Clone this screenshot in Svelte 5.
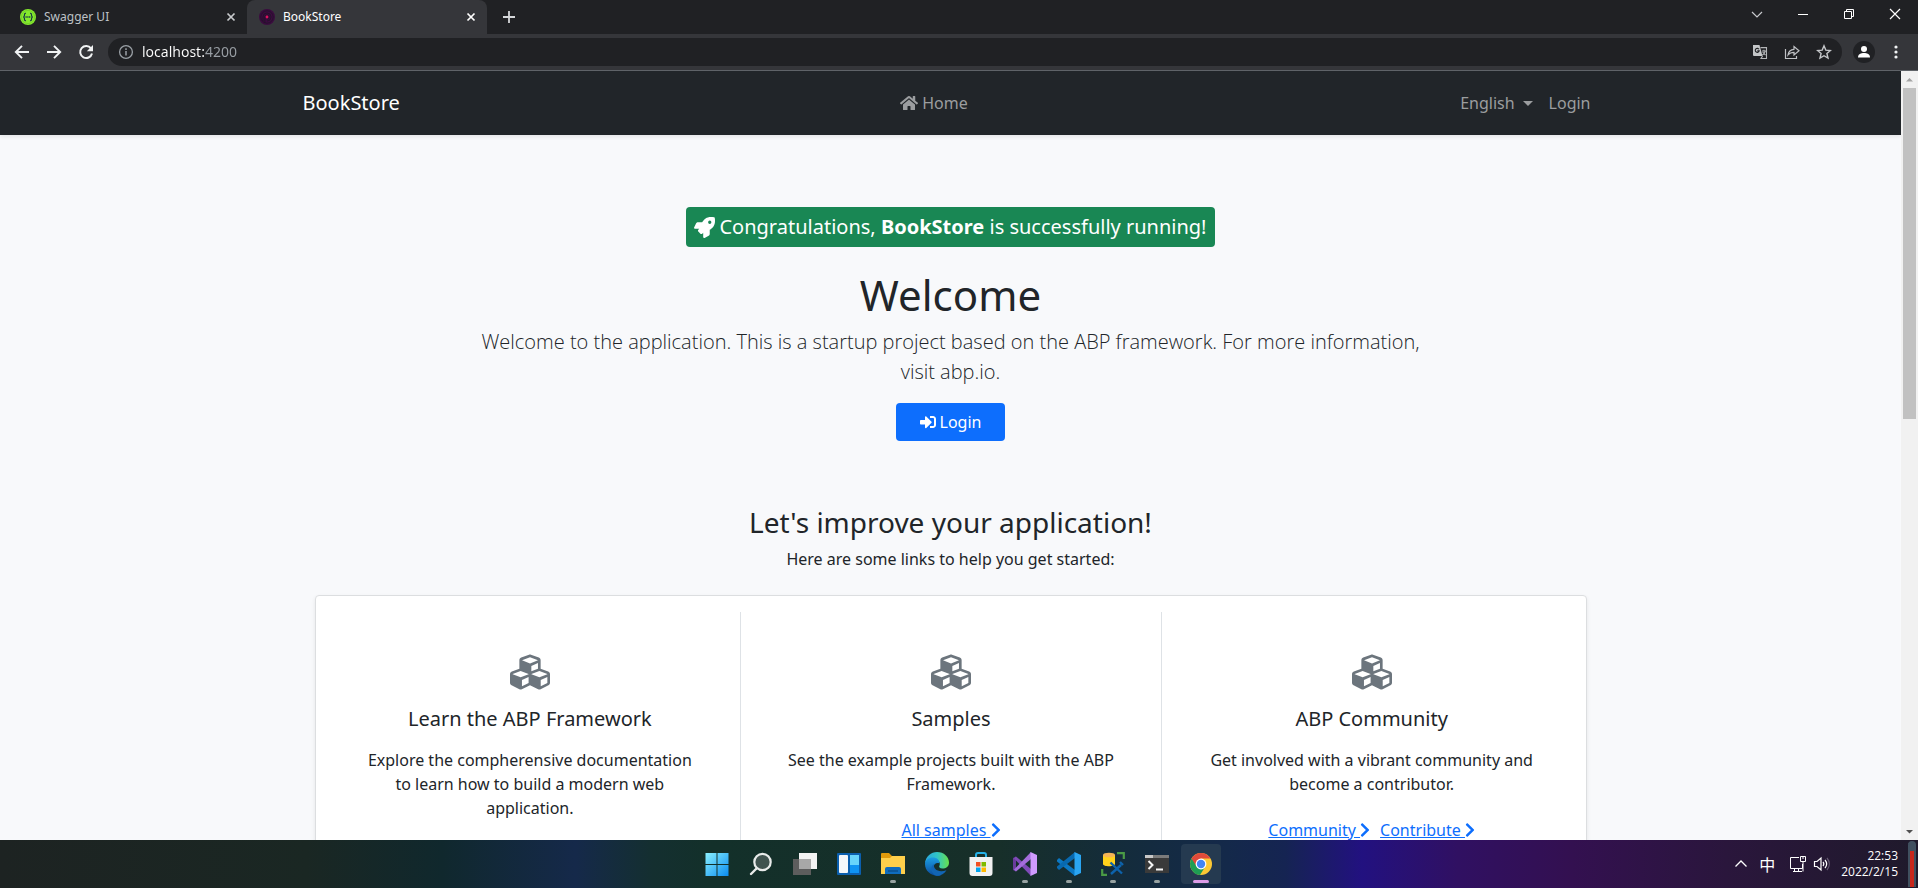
<script>
    let address = 'localhost:4200';

    const chevron = 'M285.476 272.971L91.132 467.314c-9.373 9.373-24.569 9.373-33.941 0l-22.667-22.667c-9.357-9.357-9.375-24.522-.04-33.901L188.505 256 34.484 101.255c-9.335-9.379-9.317-24.544.04-33.901l22.667-22.667c9.373-9.373 24.569-9.373 33.941 0L285.475 239.03c9.373 9.372 9.373 24.568.001 33.941z';

    const cubes = 'M488.6 250.2L392 214V105.5c0-15-9.3-28.4-23.4-33.7l-100-37.5c-8.1-3.1-17.1-3.1-25.3 0l-100 37.5c-14.1 5.3-23.4 18.7-23.4 33.7V214l-96.6 36.2C9.3 255.5 0 268.9 0 283.9V394c0 13.6 7.7 26.1 19.9 32.2l100 50c10.1 5.1 22.1 5.1 32.2 0l103.9-52 103.9 52c10.1 5.1 22.1 5.1 32.2 0l100-50c12.2-6.1 19.9-18.6 19.9-32.2V283.9c0-15-9.3-28.4-23.4-33.7zM358 214.8l-85 31.9v-68.2l85-37v73.3zM154 104.1l102-38.2 102 38.2v.6l-102 41.4-102-41.4v-.6zm84 291.1l-85 42.5v-79.1l85-38.8v75.4zm0-112l-102 41.4-102-41.4v-.6l102-38.2 102 38.2v.6zm240 112l-85 42.5v-79.1l85-38.8v75.4zm0-112l-102 41.4-102-41.4v-.6l102-38.2 102 38.2v.6z';

    const cards = [
        {
            title: 'Learn the ABP Framework',
            text: 'Explore the compherensive documentation to learn how to build a modern web application.',
            links: []
        },
        {
            title: 'Samples',
            text: 'See the example projects built with the ABP Framework.',
            links: ['All samples']
        },
        {
            title: 'ABP Community',
            text: 'Get involved with a vibrant community and become a contributor.',
            links: ['Community', 'Contribute']
        }
    ];

    const apps = [
        { id: 'start', name: 'Start' },
        { id: 'search', name: 'Search' },
        { id: 'tasks', name: 'Task view' },
        { id: 'widgets', name: 'Widgets' },
        { id: 'files', name: 'File Explorer', running: true },
        { id: 'edge', name: 'Edge' },
        { id: 'store', name: 'Store' },
        { id: 'vs', name: 'Visual Studio', running: true },
        { id: 'code', name: 'Visual Studio Code', running: true },
        { id: 'sql', name: 'SQL Server Management Studio', running: true },
        { id: 'terminal', name: 'Terminal', running: true },
        { id: 'chrome', name: 'Chrome', running: true, active: true }
    ];
</script>

<div class="screen">
    <header class="browser">
        <div class="tabs">
            <div class="tab">
                <svg class="i16" viewBox="0 0 16 16">
                    <circle cx="8" cy="8" r="8" fill="#85ea2d" />
                    <circle cx="8" cy="8" r="6.6" fill="none" stroke="#6bbf2a" stroke-width=".6" />
                    <path d="M6 4.3c-1.500-.2-1.500.7-1.500 1.700S4.400 7.800 3.300 8c1.100.2 1.200 1 1.200 2s0 1.900 1.500 1.700M10 4.300c1.500-.2 1.500.7 1.500 1.700s.1 1.800 1.200 2c-1.100.2-1.200 1-1.200 2s0 1.900-1.500 1.700" fill="none" stroke="#173647" stroke-width="1.2" />
                    <path d="M5.500 8h5" stroke="#173647" stroke-width="1.400" stroke-dasharray="1.200 .6" />
                </svg>
                <span>Swagger UI</span>
                <button aria-label="Close Swagger UI">
                    <svg class="i16" viewBox="0 0 16 16"><path d="M4.500 4.500l7 7M11.500 4.500l-7 7" stroke="#c8cacd" stroke-width="1.700" /></svg>
                </button>
            </div>
            <div class="tab active">
                <svg class="i16" viewBox="0 0 16 16">
                    <circle cx="8" cy="8" r="8" fill="#3b0a3f" />
                    <g fill="none" stroke="#1f1426" stroke-width=".8">
                        <circle cx="8" cy="8" r="6.200" />
                        <path d="M5.800 14V8a2.200 2.200 0 1 1 2.200 2.200M4 12V8a4 4 0 1 1 4 4" />
                    </g>
                    <circle cx="8" cy="8" r="1.400" fill="#e0115f" />
                </svg>
                <span>BookStore</span>
                <button aria-label="Close BookStore">
                    <svg class="i16" viewBox="0 0 16 16"><path d="M4.500 4.500l7 7M11.500 4.500l-7 7" stroke="#fff" stroke-width="1.700" /></svg>
                </button>
            </div>
            <button class="new-tab" aria-label="New tab">
                <svg class="i16" viewBox="0 0 16 16"><path d="M8 2v12M2 8h12" stroke="#d5d7da" stroke-width="1.800" /></svg>
            </button>
            <div class="window">
                <button aria-label="Search tabs"><svg class="i16" viewBox="0 0 16 16"><path d="M3 6l5 5 5-5" fill="none" stroke="#c8cacd" stroke-width="1.200" /></svg></button>
                <button aria-label="Minimize"><svg class="i16" viewBox="0 0 16 16"><path d="M3 8.500h10" stroke="#fff" /></svg></button>
                <button aria-label="Restore"><svg class="i16" viewBox="0 0 16 16"><path d="M3.500 5.500h7v7h-7zM5.500 5V3.500h7v7H11" fill="none" stroke="#fff" /></svg></button>
                <button aria-label="Close"><svg class="i16" viewBox="0 0 16 16"><path d="M3 3l10 10M13 3L3 13" stroke="#fff" stroke-width="1.200" /></svg></button>
            </div>
        </div>

        <div class="toolbar">
            <button aria-label="Back"><svg class="i16" viewBox="0 0 16 16"><path d="M15 8H2.500M8 1.800L1.800 8 8 14.200" fill="none" stroke="#f1f3f4" stroke-width="1.900" /></svg></button>
            <button aria-label="Forward"><svg class="i16" viewBox="0 0 16 16"><path d="M1 8h12.500M8 1.800L14.200 8 8 14.200" fill="none" stroke="#f1f3f4" stroke-width="1.900" /></svg></button>
            <button aria-label="Reload"><svg class="i16" viewBox="0 0 16 16"><path d="M13 4.400A6 6 0 1 0 14 9.500" fill="none" stroke="#f1f3f4" stroke-width="2" /><path d="M15 1v6.200H8.800z" fill="#f1f3f4" /></svg></button>
            <div class="omnibox">
                <svg class="i16" viewBox="0 0 16 16"><circle cx="8" cy="8" r="6.400" fill="none" stroke="#9aa0a6" stroke-width="1.300" /><path d="M8 7v4.500M8 4.300v1.600" stroke="#9aa0a6" stroke-width="1.500" /></svg>
                <input aria-label="Address" bind:value={address} />
                <button aria-label="Translate">
                    <svg class="i16" viewBox="0 0 16 16">
                        <path d="M1 1h6.500l3 11H2a1 1 0 0 1-1-1z" fill="#c4c6c8" />
                        <path d="M8.500 3.600h6v10.900H9l1.600-2.500M10 7h4M12 5.800V7M13.300 7c-.3 2-1.500 3.200-3 4M10.700 8.200l2.800 3" fill="none" stroke="#b4b6b8" stroke-width="1.100" />
                        <path d="M7 5.300a2 2 0 1 0 .2 1.600H5.300" fill="none" stroke="#202124" stroke-width="1.100" />
                    </svg>
                </button>
                <button aria-label="Share">
                    <svg class="i16" viewBox="0 0 16 16"><path d="M1.500 5v9.500h11V12M4 11c.6-4 2.600-5.500 6-5.700V2.500l5 4.300-5 4.200V8.300C7.400 8.300 5.600 9 4 11z" fill="none" stroke="#c0c2c5" stroke-width="1.200" /></svg>
                </button>
                <button aria-label="Bookmark">
                    <svg class="i16" viewBox="0 0 16 16"><path d="M8 1.800l1.800 4.300 4.600.4-3.500 3 1.100 4.600L8 11.700 4 14.100l1.100-4.600-3.500-3 4.600-.4z" fill="none" stroke="#c4c6c9" stroke-width="1.400" /></svg>
                </button>
            </div>
            <button class="avatar" aria-label="Profile"><svg class="i16" viewBox="0 0 16 16"><circle cx="8" cy="5" r="3" fill="#fff" /><path d="M2 13.500c0-3.500 3-4.500 6-4.500s6 1 6 4.500z" fill="#fff" /></svg></button>
            <button aria-label="Menu"><svg class="i16" viewBox="0 0 16 16"><g fill="#f1f3f4"><circle cx="8" cy="3" r="1.600" /><circle cx="8" cy="8" r="1.600" /><circle cx="8" cy="13" r="1.600" /></g></svg></button>
        </div>
    </header>

    <div class="viewport">
        <div class="page">
            <nav class="navbar">
                <div class="container">
                    <a class="brand" href="/">BookStore</a>
                    <a class="home" href="/">
                        <svg width="18" height="16" viewBox="0 0 576 512"><path fill="currentColor" d="M280.37 148.26L96 300.11V464a16 16 0 0 0 16 16l112.06-.29a16 16 0 0 0 15.92-16V368a16 16 0 0 1 16-16h64a16 16 0 0 1 16 16v95.64a16 16 0 0 0 16 16.05L464 480a16 16 0 0 0 16-16V300L295.67 148.26a12.19 12.19 0 0 0-15.3 0zM571.6 251.47L488 182.56V44.05a12 12 0 0 0-12-12h-56a12 12 0 0 0-12 12v72.61L318.47 43a48 48 0 0 0-61 0L4.34 251.47a12 12 0 0 0-1.6 16.9l25.5 31A12 12 0 0 0 45.15 301l235.22-193.74a12.19 12.19 0 0 1 15.3 0L530.9 301a12 12 0 0 0 16.9-1.6l25.5-31a12 12 0 0 0-1.7-16.93z" /></svg>
                        Home
                    </a>
                    <button class="language">English <span class="caret"></span></button>
                    <a href="/account/login">Login</a>
                </div>
            </nav>

            <main>
                <div class="badge">
                    <svg width="21" height="21" viewBox="0 0 512 512"><path fill="currentColor" d="M505.12 19.094c-1.19-5.532-6.658-11-12.207-12.188C460.716 0 435.507 0 410.407 0 307.175 0 245.27 55.203 199.052 128H94.838c-16.348.016-35.557 11.875-42.887 26.484L2.516 253.297A28.4 28.4 0 0 0 0 264a24 24 0 0 0 24.006 24h103.81l-22.474 22.469c-11.365 11.361-12.996 32.258 0 45.25l50.904 50.906c11.156 11.188 32.156 13.156 45.277 0l22.475-22.469V488a24 24 0 0 0 24.006 24 28.56 28.56 0 0 0 10.707-2.516l98.728-49.39c14.629-7.297 26.508-26.5 26.508-42.86V312.797c72.597-46.313 128.035-108.406 128.035-211.094.093-25.203.093-50.406-6.862-82.609zM384.04 168a40 40 0 1 1 40.01-40 40.02 40.02 0 0 1-40.01 40z" /></svg>
                    <span>Congratulations, <strong>BookStore</strong> is successfully running!</span>
                </div>
                <h1>Welcome</h1>
                <p class="lead">Welcome to the application. This is a startup project based on the ABP framework. For more information, visit abp.io.</p>
                <a class="btn" href="/account/login">
                    <svg width="16" height="16" viewBox="0 0 512 512"><path fill="currentColor" d="M416 448h-84c-6.600 0-12-5.400-12-12v-40c0-6.600 5.400-12 12-12h84c17.700 0 32-14.300 32-32V160c0-17.700-14.300-32-32-32h-84c-6.600 0-12-5.400-12-12V76c0-6.600 5.400-12 12-12h84c53 0 96 43 96 96v192c0 53-43 96-96 96zm-47-201L201 79c-15-15-41-4.500-41 17v96H24c-13.300 0-24 10.700-24 24v96c0 13.300 10.700 24 24 24h136v96c0 21.500 26 32 41 17l168-168c9.300-9.400 9.300-24.600 0-34z" /></svg>
                    Login
                </a>

                <h2>Let's improve your application!</h2>
                <p>Here are some links to help you get started:</p>

                <section class="card">
                    {#each cards as card}
                        <article>
                            <svg class="cubes" width="40" height="40" viewBox="0 0 512 512"><path fill="currentColor" d={cubes} /></svg>
                            <h3>{card.title}</h3>
                            <p>{card.text}</p>
                            <div class="links">
                                {#each card.links as link}
                                    <a href="/">{link} <svg width="10" height="16" viewBox="0 0 320 512"><path fill="currentColor" d={chevron} /></svg></a>
                                {/each}
                            </div>
                        </article>
                    {/each}
                </section>
            </main>
        </div>
        <div class="scrollbar">
            <svg width="17" height="17" viewBox="0 0 17 17"><path d="M5 10.500h7L8.500 7z" fill="#a3a3a3" /></svg>
            <div class="track"><div class="thumb"></div></div>
            <svg width="17" height="17" viewBox="0 0 17 17"><path d="M5 7h7l-3.500 3.500z" fill="#505050" /></svg>
        </div>
    </div>

    <footer class="taskbar">
        <div class="apps">
            {#each apps as app}
                <button class:running={app.running} class:active={app.active} aria-label={app.name}>
                    <svg width="24" height="24" viewBox="0 0 24 24">
                        {#if app.id === 'start'}
                            <defs><linearGradient id="win" x1="0" y1="0" x2="1" y2="1"><stop stop-color="#8af0ff" /><stop offset="1" stop-color="#0a8cf0" /></linearGradient></defs>
                            <path d="M.5 1h11v11H.5zM12.500 1h11v11h-11zM.5 13h11v11H.5zM12.500 13h11v11h-11z" fill="url(#win)" />
                        {:else if app.id === 'search'}
                            <circle cx="13.500" cy="10" r="8.200" fill="#40534f" stroke="#e8ebea" stroke-width="2.200" />
                            <path d="M7.500 16.500l-5.500 5.500" stroke="#e8ebea" stroke-width="2.400" stroke-linecap="round" />
                        {:else if app.id === 'tasks'}
                            <path d="M6 1h18v16H6z" fill="#f3f3f3" />
                            <path d="M0 7h18v16H0z" fill="#5d5d5d" />
                            <path d="M6 7h12v10H6z" fill="#a8a8a8" />
                        {:else if app.id === 'widgets'}
                            <rect y="1" width="24" height="22" rx="1" fill="#0b5fae" />
                            <rect x="2" y="3" width="9" height="18" rx="1" fill="#f5f7fa" />
                            <path d="M13 3h9v10h-9z" fill="#68d4fb" />
                            <path d="M13 13h9v8h-9z" fill="#0f93f2" />
                        {:else if app.id === 'files'}
                            <path d="M0 2a1 1 0 0 1 1-1h7l3 3h12v8H0z" fill="#e29b0b" />
                            <path d="M0 6h9l2-2h13v18H0z" fill="#ffd04b" />
                            <path d="M4 22v-5a2 2 0 0 1 2-2h12a2 2 0 0 1 2 2v5z" fill="#0f6cbd" />
                            <path d="M7 19h10" stroke="#0b4f8e" stroke-width="1.500" />
                        {:else if app.id === 'edge'}
                            <defs>
                                <linearGradient id="edge-top" x1="0" x2="1"><stop stop-color="#2aa6dc" /><stop offset=".5" stop-color="#30c4c8" /><stop offset="1" stop-color="#68e04a" /></linearGradient>
                                <linearGradient id="edge-low" y1="0" y2="1" x1="0" x2="0"><stop stop-color="#1b9de2" /><stop offset="1" stop-color="#0b4a9c" /></linearGradient>
                            </defs>
                            <path d="M0 11C1 4 6 0 12 0c7 0 12 5 12 10.500 0 4-3 6-6.500 6-3 0-4-1.500-3-3 1-2 0-5.500-4-5.500C6 8 1.500 9 0 11z" fill="url(#edge-top)" />
                            <path d="M0 12c0-4 4-6.500 8-6.500 3.500 0 6.500 2 6.500 6-3-1.500-6 1-6 4 0 4.500 4 7.500 8 8.300-8 1.500-16.500-3.500-16.500-11.800z" fill="url(#edge-low)" />
                            <path d="M9 12c-1 5 4 9 12.500 6.300-2 3.700-6 5.700-10 5.500C6 22 4.500 15 9 12z" fill="#1265b4" />
                        {:else if app.id === 'store'}
                            <path d="M7 6V3a2 2 0 0 1 2-2h6a2 2 0 0 1 2 2v3" fill="none" stroke="#25b1e8" stroke-width="2" />
                            <path d="M.5 5h23v16a3 3 0 0 1-3 3h-17a3 3 0 0 1-3-3z" fill="#f1f1f1" />
                            <path d="M7 10h4.500v4.500H7z" fill="#f25022" /><path d="M12.500 10H17v4.500h-4.500z" fill="#7fba00" />
                            <path d="M7 15.500h4.500V20H7z" fill="#00a4ef" /><path d="M12.500 15.500H17V20h-4.500z" fill="#ffb900" />
                        {:else if app.id === 'vs'}
                            <path d="M0 6l3-1.500v15L0 18z" fill="#6a3b9c" />
                            <path d="M1 6.500l2-2L18 17v7z" fill="#7f4bb8" />
                            <path d="M1 17.500l2 2L18 7V0z" fill="#a46ddb" />
                            <path d="M17.500 0L24 3v18l-6.500 3z" fill="#cf9bff" />
                        {:else if app.id === 'code'}
                            <path d="M0 8l2-2 16 12v6L0 9.500z" fill="#0b78c4" />
                            <path d="M0 16l2 2L18 6V0L0 14.500z" fill="#0869b0" />
                            <path d="M17.500 0L24 3v18l-6.500 3z" fill="#2aa5f2" />
                        {:else if app.id === 'sql'}
                            <path d="M2 3v9c0 3 12 3 12 0V3z" fill="#ffd21c" />
                            <ellipse cx="8" cy="3" rx="6" ry="2.300" fill="#f5b455" />
                            <path d="M16 1.200h6.800V7M6 22.800H1.200V17" fill="none" stroke="#4a9a45" stroke-width="2.200" />
                            <path d="M10 22l10-9M11 12l10 9.500M9.500 10.500l3 3M19 10l3 3" stroke="#0d62ab" stroke-width="2.400" />
                        {:else if app.id === 'terminal'}
                            <path d="M0 3h24v18H0z" fill="#3a3a3a" />
                            <path d="M0 3h24v3H0z" fill="#7b7b7b" /><path d="M0 3h8v3H0z" fill="#c8c8c8" />
                            <path d="M3.500 9l4 4-4 4M11 17.500h7" fill="none" stroke="#f5f5f5" stroke-width="2" />
                        {:else}
                            <circle cx="12" cy="12" r="11" fill="#fcc934" />
                            <path d="M2.500 6.500a11 11 0 0 0 8.500 16.500l5-8-4-3z" fill="#1e9e54" />
                            <path d="M2.500 6.500A11 11 0 0 1 21.500 6.500H12l-5 7z" fill="#e04a3b" />
                            <circle cx="12" cy="12" r="5.400" fill="#fff" /><circle cx="12" cy="12" r="4.200" fill="#4285f4" />
                        {/if}
                    </svg>
                </button>
            {/each}
        </div>
        <div class="tray">
            <svg class="up i16" viewBox="0 0 16 16"><path d="M2.500 10.500L8 5l5.500 5.500" fill="none" stroke="#fff" stroke-width="1.300" /></svg>
            <span class="ime">中</span>
            <svg width="18" height="18" viewBox="0 0 18 18"><path d="M10 2.500H1.500v11h12V9M5.500 13.500v3M9.500 13.500v3M4 16.500h9M11.500 1.500h5v5h-5zM14 6.500v10M13 3h2" fill="none" stroke="#fff" /></svg>
            <svg width="18" height="18" viewBox="0 0 18 18"><path d="M1.500 6.500H4L8 3v12l-4-3.500H1.500zM10 7c1 1.200 1 2.800 0 4M12 5c2 2.400 2 5.600 0 8" fill="none" stroke="#fff" stroke-width="1.200" /><path d="M14 3c3 3.600 3 8.400 0 12" fill="none" stroke="#665c74" stroke-width="1.200" /></svg>
            <time datetime="2022-02-15T22:53">22:53<br />2022/2/15</time>
            <div class="meter"></div>
        </div>
    </footer>
</div>

<style>
    :global(body) {
        margin: 0;
        overflow: hidden;
    }

    .screen {
        display: flex;
        flex-direction: column;
        height: 100vh;
        font-family: "Segoe UI", "Noto Sans", "Open Sans", sans-serif;
        font-size: 16px;
        line-height: 24px;
        color: #212529;
    }

    svg {
        flex: none;
    }

    button {
        display: flex;
        align-items: center;
        justify-content: center;
        padding: 0;
        border: 0;
        background: none;
        font: inherit;
        color: inherit;
    }

    h1, h2, h3, p {
        margin: 0;
        font-weight: 400;
    }

    .i16 {
        width: 16px;
        height: 16px;
    }

    /* browser chrome */
    .browser {
        flex: none;
        background: #35363a;
        border-bottom: 1px solid #5f6368;
    }

    .tabs {
        display: flex;
        height: 34px;
        background: #202124;
    }

    .tab {
        display: flex;
        align-items: center;
        gap: 8px;
        box-sizing: border-box;
        width: 247px;
        padding: 0 8px 0 20px;
        font-size: 12px;
        color: #bdc1c6;
    }

    .tab span {
        flex: 1;
    }

    .tab.active {
        width: 240px;
        padding-left: 12px;
        border-radius: 8px 8px 0 0;
        background: #35363a;
        color: #fff;
    }

    .new-tab {
        width: 44px;
    }

    .window {
        display: flex;
        margin-left: auto;
        padding-bottom: 6px;
    }

    .window button {
        width: 46px;
    }

    .toolbar {
        display: flex;
        align-items: center;
        height: 36px;
        padding: 0 6px;
    }

    .toolbar button {
        width: 32px;
        height: 28px;
    }

    .omnibox {
        display: flex;
        align-items: center;
        flex: 1;
        height: 28px;
        margin: 0 11px 0 6px;
        padding: 0 2px 0 10px;
        border-radius: 14px;
        background: #202124;
    }

    .omnibox input {
        flex: 1;
        padding: 0 8px;
        border: 0;
        outline: 0;
        font: inherit;
        font-size: 14px;
        /* host in white, port dimmed */
        background: linear-gradient(to right, #fff 71px, #9aa0a6 71px);
        background-clip: text;
        color: transparent;
    }

    .toolbar .avatar {
        width: 22px;
        height: 22px;
        margin-right: 5px;
        border-radius: 50%;
        background: #202124;
    }

    /* page */
    .viewport {
        display: flex;
        flex: 1;
        min-height: 0;
    }

    .page {
        flex: 1;
        overflow: hidden;
        background: #f8f9fb;
    }

    .navbar {
        background: #212529;
        box-shadow: 0 2px 4px rgba(0, 0, 0, 0.08);
    }

    .container {
        display: flex;
        align-items: center;
        box-sizing: border-box;
        max-width: 1320px;
        height: 64px;
        margin: 0 auto;
        padding: 0 12px;
        color: #9b9d9f;
    }

    .container a {
        padding: 0 8px;
        color: inherit;
        text-decoration: none;
    }

    .container .brand {
        margin-right: 16px;
        padding: 0;
        font-size: 20px;
        color: #fff;
    }

    .container .home {
        display: flex;
        align-items: center;
        gap: 4px;
        margin: 0 auto;
    }

    .language {
        gap: 8px;
        padding: 0 8px;
    }

    .caret {
        border: 5px solid transparent;
        border-top-color: currentColor;
        border-bottom: 0;
    }

    main {
        display: flex;
        flex-direction: column;
        align-items: center;
        padding: 72px 24px 0;
        text-align: center;
    }

    .badge {
        display: flex;
        align-items: center;
        gap: 4px;
        height: 40px;
        padding: 0 8px;
        border-radius: 4px;
        background: #198754;
        font-size: 20px;
        color: #fff;
    }

    h1 {
        margin: 24px 0 8px;
        font-size: 42px;
        line-height: 48px;
    }

    .lead {
        max-width: 966px;
        font-family: "Segoe UI", "Open Sans", sans-serif;
        font-size: 20px;
        font-weight: 300;
        line-height: 30px;
    }

    .btn {
        display: flex;
        align-items: center;
        gap: 4px;
        height: 38px;
        margin: 16px 0 64px;
        padding: 0 24px;
        border-radius: 4px;
        background: #0d6efd;
        color: #fff;
        text-decoration: none;
    }

    h2 {
        margin-bottom: 8px;
        font-size: 28px;
        line-height: 34px;
    }

    .card {
        display: grid;
        grid-template-columns: repeat(3, 1fr);
        box-sizing: border-box;
        width: 100%;
        max-width: 1272px;
        margin-top: 24px;
        padding: 16px 4px;
        border: 1px solid #dcdee0;
        border-radius: 4px;
        background: #fff;
        box-shadow: 0 2px 4px rgba(0, 0, 0, 0.08);
    }

    article {
        padding: 40px;
    }

    article + article {
        border-left: 1px solid #dee2e6;
    }

    .cubes {
        display: block;
        margin: 0 auto;
        color: #6c757d;
    }

    h3 {
        margin: 14px 0 16px;
        font-size: 20px;
        line-height: 26px;
    }

    .links {
        display: flex;
        justify-content: center;
        gap: 10px;
        margin-top: 22px;
    }

    .links a {
        color: #0d6efd;
    }

    .links svg {
        vertical-align: -2px;
    }

    .scrollbar {
        display: flex;
        flex-direction: column;
        width: 17px;
        background: #f1f1f1;
    }

    .track {
        flex: 1;
        padding: 0 2px;
    }

    .thumb {
        height: 45%;
        background: #c1c1c1;
    }

    /* taskbar */
    .taskbar {
        display: grid;
        grid-template-columns: 1fr auto 1fr;
        align-items: center;
        flex: none;
        height: 48px;
        background: linear-gradient(to right, #1d2322 0%, #1a2723 16%, #10282d 23%, #15294a 30%, #142f30 34%, #13302a 37%, #172f29 52%, #142c3a 58%, #14294a 64%, #152452 67%, #221180 71%, #301062 76%, #331050 82%, #2a163c 90%, #1f1a2b 100%);
    }

    .apps {
        display: flex;
        grid-column: 2;
        gap: 4px;
    }

    .apps button {
        position: relative;
        width: 40px;
        height: 40px;
        border-radius: 4px;
    }

    .apps .active {
        background: #253a50;
    }

    .apps .running::after {
        content: "";
        position: absolute;
        bottom: 1px;
        width: 6px;
        height: 3px;
        border-radius: 2px;
        background: #98a3a2;
    }

    .apps .active::after {
        width: 16px;
        background: #dc9ce8;
    }

    .tray {
        display: flex;
        align-items: center;
        justify-content: flex-end;
        gap: 6px;
        padding-right: 2px;
        color: #fff;
    }

    .up {
        margin-right: 4px;
    }

    .ime {
        margin-right: 8px;
        font-family: "Noto Sans CJK SC", sans-serif;
        font-size: 16px;
    }

    time {
        margin: 0 4px;
        font-family: "Segoe UI", "Open Sans", sans-serif;
        font-size: 12px;
        line-height: 16px;
        text-align: right;
    }

    .meter {
        box-sizing: border-box;
        width: 8px;
        height: 46px;
        border: solid #40505f;
        border-width: 10px 2px 0;
        border-radius: 4px 4px 0 0;
        background: #c8271c;
    }
</style>
